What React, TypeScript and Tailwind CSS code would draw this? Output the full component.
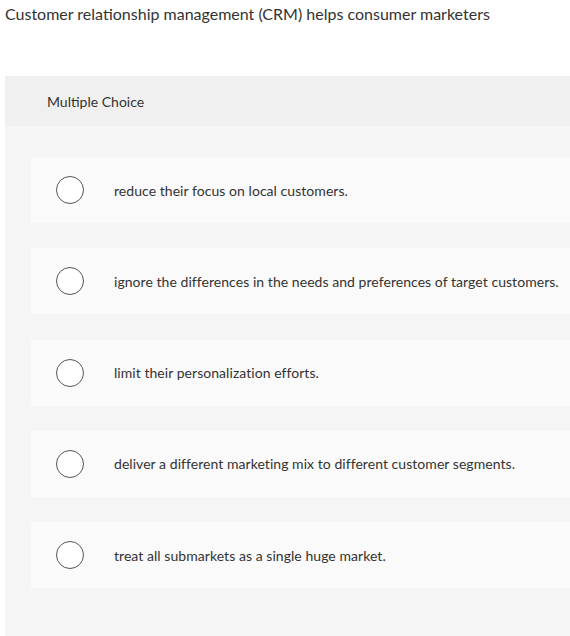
const options = [
  'reduce their focus on local customers.',
  'ignore the differences in the needs and preferences of target customers.',
  'limit their personalization efforts.',
  'deliver a different marketing mix to different customer segments.',
  'treat all submarkets as a single huge market.',
];

export default function App() {
  return (
    <div className="w-[570px] h-[636px] overflow-hidden bg-white text-[#333]" style={{ fontFamily: 'Lato, "Liberation Sans", sans-serif' }}>
      <p className="pl-[5px] pt-[3px] text-[16px] leading-[22px]">
        Customer relationship management (CRM) helps consumer marketers
      </p>

      <div className="ml-[5px] mt-[51px] bg-[#f5f5f5] pb-[60px]">
        <div className="h-[50px] bg-[#f0f0f0] pl-[42px] flex items-center text-[14px]">
          Multiple Choice
        </div>

        <div className="flex flex-col gap-[25.25px] pt-[31px] pl-[26px]">
          {options.map((opt) => (
            <div key={opt} className="h-[66px] bg-[#fafafa] flex items-center">
              <span className="ml-[25px] w-[28px] h-[28px] rounded-full border-[1.5px] border-[#555] bg-white shrink-0" />
              <span className="ml-[30px] text-[14px] tracking-[0.05px] whitespace-nowrap">{opt}</span>
            </div>
          ))}
        </div>
      </div>
    </div>
  );
}
